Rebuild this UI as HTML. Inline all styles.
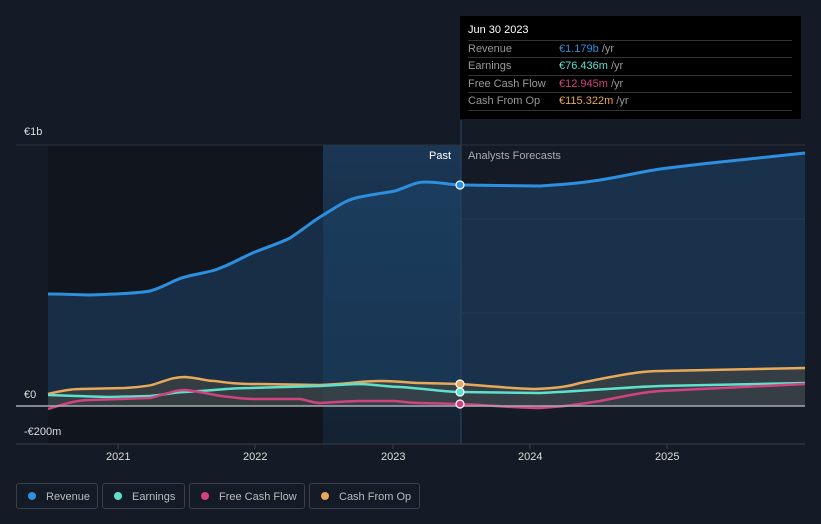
<!DOCTYPE html><html><head><style>
body{margin:0;width:821px;height:524px;background:#151b26;font-family:"Liberation Sans",sans-serif;overflow:hidden;position:relative}
.t{position:absolute;color:#ddd;font-size:11px}
.tip{position:absolute;left:460px;top:16px;width:341px;height:103px;background:#000;}
.tip .h{position:absolute;left:8px;top:8px;color:#fff;font-size:11px}
.row{position:absolute;left:8px;width:324px;border-top:1px solid #333;height:17px;font-size:11px;color:#999;line-height:17px}
.row span{position:absolute;left:91px}
.leg{position:absolute;top:483px;height:26px;border:1px solid #3a3f4a;border-radius:3px;color:#bbb;font-size:11px;line-height:26px;box-sizing:border-box}
.leg i{display:inline-block;width:8px;height:8px;border-radius:50%;margin:0 10px 0 11px;vertical-align:-0px}
</style></head><body>
<svg width="821" height="524" style="position:absolute;left:0;top:0">
<rect x="48" y="145" width="275" height="299" fill="#11151d"/>
<defs><linearGradient id="g" x1="0" y1="0" x2="0" y2="1"><stop offset="0" stop-color="#1b3a5a"/><stop offset="1" stop-color="#142233"/></linearGradient></defs>
<rect x="323" y="145" width="138" height="299" fill="url(#g)" opacity="0.9"/>
<line x1="461" y1="120" x2="461" y2="444" stroke="#2a4a66"/>
<g stroke="#2a303b"><line x1="16" y1="145" x2="805" y2="145"/><line x1="461" y1="219" x2="805" y2="219"/><line x1="461" y1="313" x2="805" y2="313"/></g>
<path d="M48,294 C70,294 80,295 90,295 C120,294 140,293 150,291 C165,287 175,279 185,277 C200,273 205,273 215,270 C235,263 240,258 255,252 C270,246 280,243 290,238 C305,228 312,222 320,217 C340,205 345,200 360,197 C380,193 385,193 395,191 C410,186 415,182 425,182 C440,182 450,185 461,185 L540,186 C570,184 580,183 600,180 C630,175 640,172 660,169 C700,164 720,162 730,161 L805,153 L805,406 L48,406Z" fill="#1d4468" opacity="0.55"/>
<path d="M48,294 C70,294 80,295 90,295 C120,294 140,293 150,291 C165,287 175,279 185,277 C200,273 205,273 215,270 C235,263 240,258 255,252 C270,246 280,243 290,238 C305,228 312,222 320,217 C340,205 345,200 360,197 C380,193 385,193 395,191 C410,186 415,182 425,182 C440,182 450,185 461,185 L540,186 C570,184 580,183 600,180 C630,175 640,172 660,169 C700,164 720,162 730,161 L805,153" fill="none" stroke="#2d8fdf" stroke-width="3"/>
<path d="M48,394 C60,391 70,389 80,389 L125,388 C140,387 150,386 155,384 C170,379 175,377 185,377 C200,378 205,381 215,381 C235,384 245,384 260,384 L320,385 C350,384 360,381 380,381 C400,381 410,383 420,383 L461,384 C500,387 520,389 535,389 C560,388 570,386 580,383 C620,375 640,371 660,371 L805,368 L805,406 L48,406Z" fill="#6b5a3a" opacity="0.35"/>
<path d="M48,394 C60,391 70,389 80,389 L125,388 C140,387 150,386 155,384 C170,379 175,377 185,377 C200,378 205,381 215,381 C235,384 245,384 260,384 L320,385 C350,384 360,381 380,381 C400,381 410,383 420,383 L461,384 C500,387 520,389 535,389 C560,388 570,386 580,383 C620,375 640,371 660,371 L805,368" fill="none" stroke="#e8a95a" stroke-width="2.5"/>
<path d="M48,395 C80,396 100,397 110,397 L150,396 C170,394 175,392 185,392 C220,390 230,388 250,388 L320,386 C340,385 350,384 360,384 C380,385 390,387 400,387 C430,389 445,392 461,392 L540,393 C600,390 630,387 660,386 L805,383" fill="none" stroke="#5de0cc" stroke-width="2.5"/>
<path d="M48,409 C70,402 80,400 90,400 L150,398 C170,393 175,390 185,390 C205,392 215,396 230,397 C245,399 250,399 260,399 L300,399 C310,401 315,403 320,403 C340,402 350,401 360,401 L395,401 C405,402 410,403 420,403 L461,404 C500,406 520,408 540,408 C570,406 580,404 600,401 C630,395 645,392 660,391 L805,384" fill="none" stroke="#d0437f" stroke-width="2.5"/>
<line x1="16" y1="406" x2="805" y2="406" stroke="#a8abb0" stroke-width="1.5"/>
<line x1="16" y1="444" x2="805" y2="444" stroke="#3a3f4a"/>
<g stroke="#3a3f4a"><line x1="118" y1="444" x2="118" y2="449"/><line x1="255" y1="444" x2="255" y2="449"/><line x1="393" y1="444" x2="393" y2="449"/><line x1="530" y1="444" x2="530" y2="449"/><line x1="667" y1="444" x2="667" y2="449"/></g>
<g stroke="#fff" stroke-width="1.2"><circle cx="460" cy="185" r="4" fill="#2d8fdf"/><circle cx="460" cy="384" r="4" fill="#e8a95a"/><circle cx="460" cy="392" r="4" fill="#5de0cc"/><circle cx="460" cy="404" r="4" fill="#d0437f"/></g>
</svg>
<div class="t" style="left:24px;top:126px">€1b</div>
<div class="t" style="left:24px;top:389px">€0</div>
<div class="t" style="left:24px;top:426px">-€200m</div>
<div class="t" style="left:429px;top:150px;color:#fff">Past</div>
<div class="t" style="left:468px;top:150px;color:#aaa">Analysts Forecasts</div>
<div class="t" style="left:106px;top:451px">2021</div>
<div class="t" style="left:243px;top:451px">2022</div>
<div class="t" style="left:381px;top:451px">2023</div>
<div class="t" style="left:518px;top:451px">2024</div>
<div class="t" style="left:655px;top:451px">2025</div>
<div class="tip"><div class="h">Jun 30 2023</div>
<div class="row" style="top:24px">Revenue<span><b style="font-weight:normal;color:#2d8fdf">€1.179b</b> /yr</span></div>
<div class="row" style="top:41px">Earnings<span><b style="font-weight:normal;color:#5de0cc">€76.436m</b> /yr</span></div>
<div class="row" style="top:59px">Free Cash Flow<span><b style="font-weight:normal;color:#d0437f">€12.945m</b> /yr</span></div>
<div class="row" style="top:76px;border-bottom:1px solid #333">Cash From Op<span><b style="font-weight:normal;color:#e8a95a">€115.322m</b> /yr</span></div>
</div>
<div class="leg" style="left:16px;width:82px"><i style="background:#2d8fdf"></i>Revenue</div>
<div class="leg" style="left:102px;width:83px"><i style="background:#5de0cc"></i>Earnings</div>
<div class="leg" style="left:189px;width:116px"><i style="background:#d0437f"></i>Free Cash Flow</div>
<div class="leg" style="left:309px;width:111px"><i style="background:#e8a95a"></i>Cash From Op</div>
</body></html>
